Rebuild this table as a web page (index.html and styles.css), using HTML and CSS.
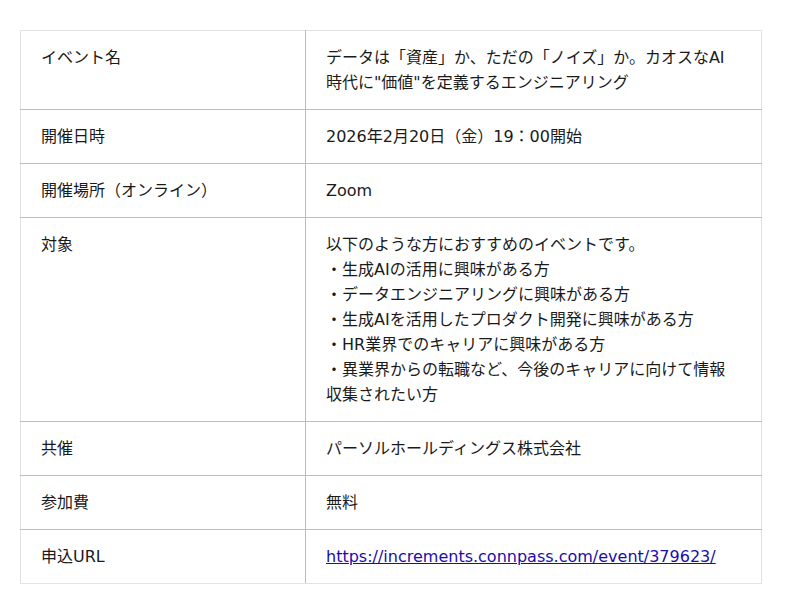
FILE: index.html
```html
<!DOCTYPE html>
<html lang="ja">
<head>
<meta charset="utf-8">
<link rel="stylesheet" href="styles.css">
</head>
<body>
<table class="info">
  <tr><td class="label">イベント名</td><td class="value">データは「資産」か、ただの「ノイズ」か。カオスなAI時代に"価値"を定義するエンジニアリング</td></tr>
  <tr><td class="label">開催日時</td><td class="value">2026年2月20日（金）19：00開始</td></tr>
  <tr><td class="label">開催場所（オンライン）</td><td class="value">Zoom</td></tr>
  <tr><td class="label">対象</td><td class="value">以下のような方におすすめのイベントです。<br>・生成AIの活用に興味がある方<br>・データエンジニアリングに興味がある方<br>・生成AIを活用したプロダクト開発に興味がある方<br>・HR業界でのキャリアに興味がある方<br>・異業界からの転職など、今後のキャリアに向けて情報収集されたい方</td></tr>
  <tr><td class="label">共催</td><td class="value">パーソルホールディングス株式会社</td></tr>
  <tr><td class="label">参加費</td><td class="value">無料</td></tr>
  <tr><td class="label">申込URL</td><td class="value"><a class="link" href="#">https://increments.connpass.com/event/379623/</a></td></tr>
</table>
</body>
</html>
```
FILE: styles.css
```css
html, body {
  margin: 0;
  background: #fff;
}
body {
  padding: 30px 20px;
  font-family: "DejaVu Sans", "Noto Sans CJK JP", sans-serif;
  font-size: 16px;
  line-height: 25px;
  color: #1a1a1a;
}
.info {
  width: 742px;
  border-collapse: collapse;
  table-layout: fixed;
}
.info td {
  border: 1px solid #bdbdbd;
  padding: 14px 24px 14px 20px;
  vertical-align: top;
}
.info tr:first-child td { border-top-color: #e2e2e2; }
.info tr:last-child td { border-bottom-color: #e2e2e2; }
.info td:first-child { border-left-color: #e2e2e2; }
.info td:last-child { border-right-color: #e2e2e2; }
.label {
  width: 240px;
}
.link {
  color: #1a0dab;
  text-decoration: underline;
}
```
